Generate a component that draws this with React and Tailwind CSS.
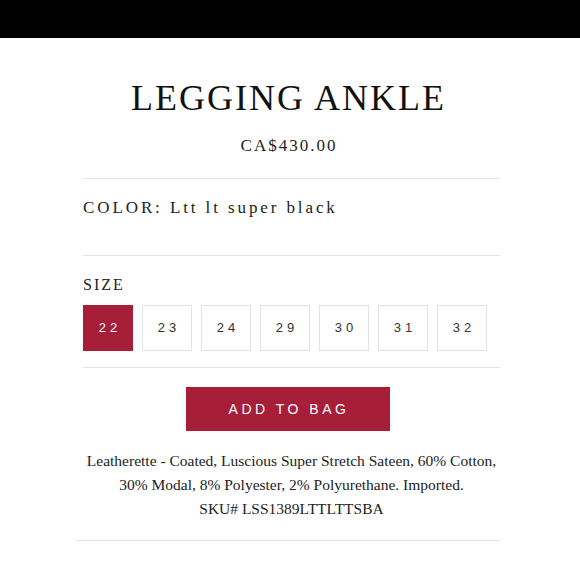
const sizes = ['22', '23', '24', '29', '30', '31', '32']

const App = () => {
  const selected = '22'

  return (
    <div className="w-[580px] h-[580px] bg-white overflow-hidden">
      <div className="h-[38px] bg-black" />
      <div className="ml-[83px] w-[417px] flex flex-col" style={{ fontFamily: '"Liberation Serif", serif' }}>
        <h1 className="mt-[42px] pr-[6px] text-center text-[36px] leading-[36px] tracking-[2px] text-[#111]">LEGGING ANKLE</h1>
        <p className="mt-[21px] pr-[5px] text-center text-[17px] leading-[17px] tracking-[2px] text-[#222]">CA$430.00</p>
        <div className="mt-[24px] h-px bg-[#e4e4e4]" />
        <p className="mt-[20px] text-[17px] leading-[17px] tracking-[2.9px] text-[#222]">
          COLOR: Ltt lt super black
        </p>
        <div className="mt-[39px] h-px bg-[#e4e4e4]" />
        <p className="mt-[21px] text-[16px] leading-[16px] tracking-[2px] text-[#222]">SIZE</p>
        <div className="mt-[12px] flex gap-[9px]">
          {sizes.map((s) => (
            <button
              key={s}
              className={
                s === selected
                  ? 'w-[50px] h-[46px] bg-[#a61e37] text-white text-[13px] tracking-[4px] pl-[4px]'
                  : 'w-[50px] h-[46px] border border-[#e2e2e2] bg-white text-[#333] text-[13px] tracking-[4px] pl-[4px]'
              }
              style={{ fontFamily: '"Liberation Sans", sans-serif' }}
            >
              {s}
            </button>
          ))}
        </div>
        <div className="mt-[16px] h-px bg-[#e4e4e4]" />
        <button
          className="mt-[19px] self-center -ml-[8px] w-[204px] h-[44px] bg-[#a61e37] text-white text-[14px] tracking-[3.5px] pl-[3px]"
          style={{ fontFamily: '"Liberation Sans", sans-serif' }}
        >
          ADD TO BAG
        </button>
        <p className="mt-[18px] -ml-[4px] -mr-[4px] text-center text-[15.5px] leading-[24px] text-[#222]">
          Leatherette - Coated, Luscious Super Stretch Sateen, 60% Cotton,
          <br />
          30% Modal, 8% Polyester, 2% Polyurethane. Imported.
          <br />
          SKU# LSS1389LTTLTTSBA
        </p>
        <div className="mt-[19px] -ml-[7px] h-px bg-[#e4e4e4]" />
      </div>
    </div>
  )
}

export default App
